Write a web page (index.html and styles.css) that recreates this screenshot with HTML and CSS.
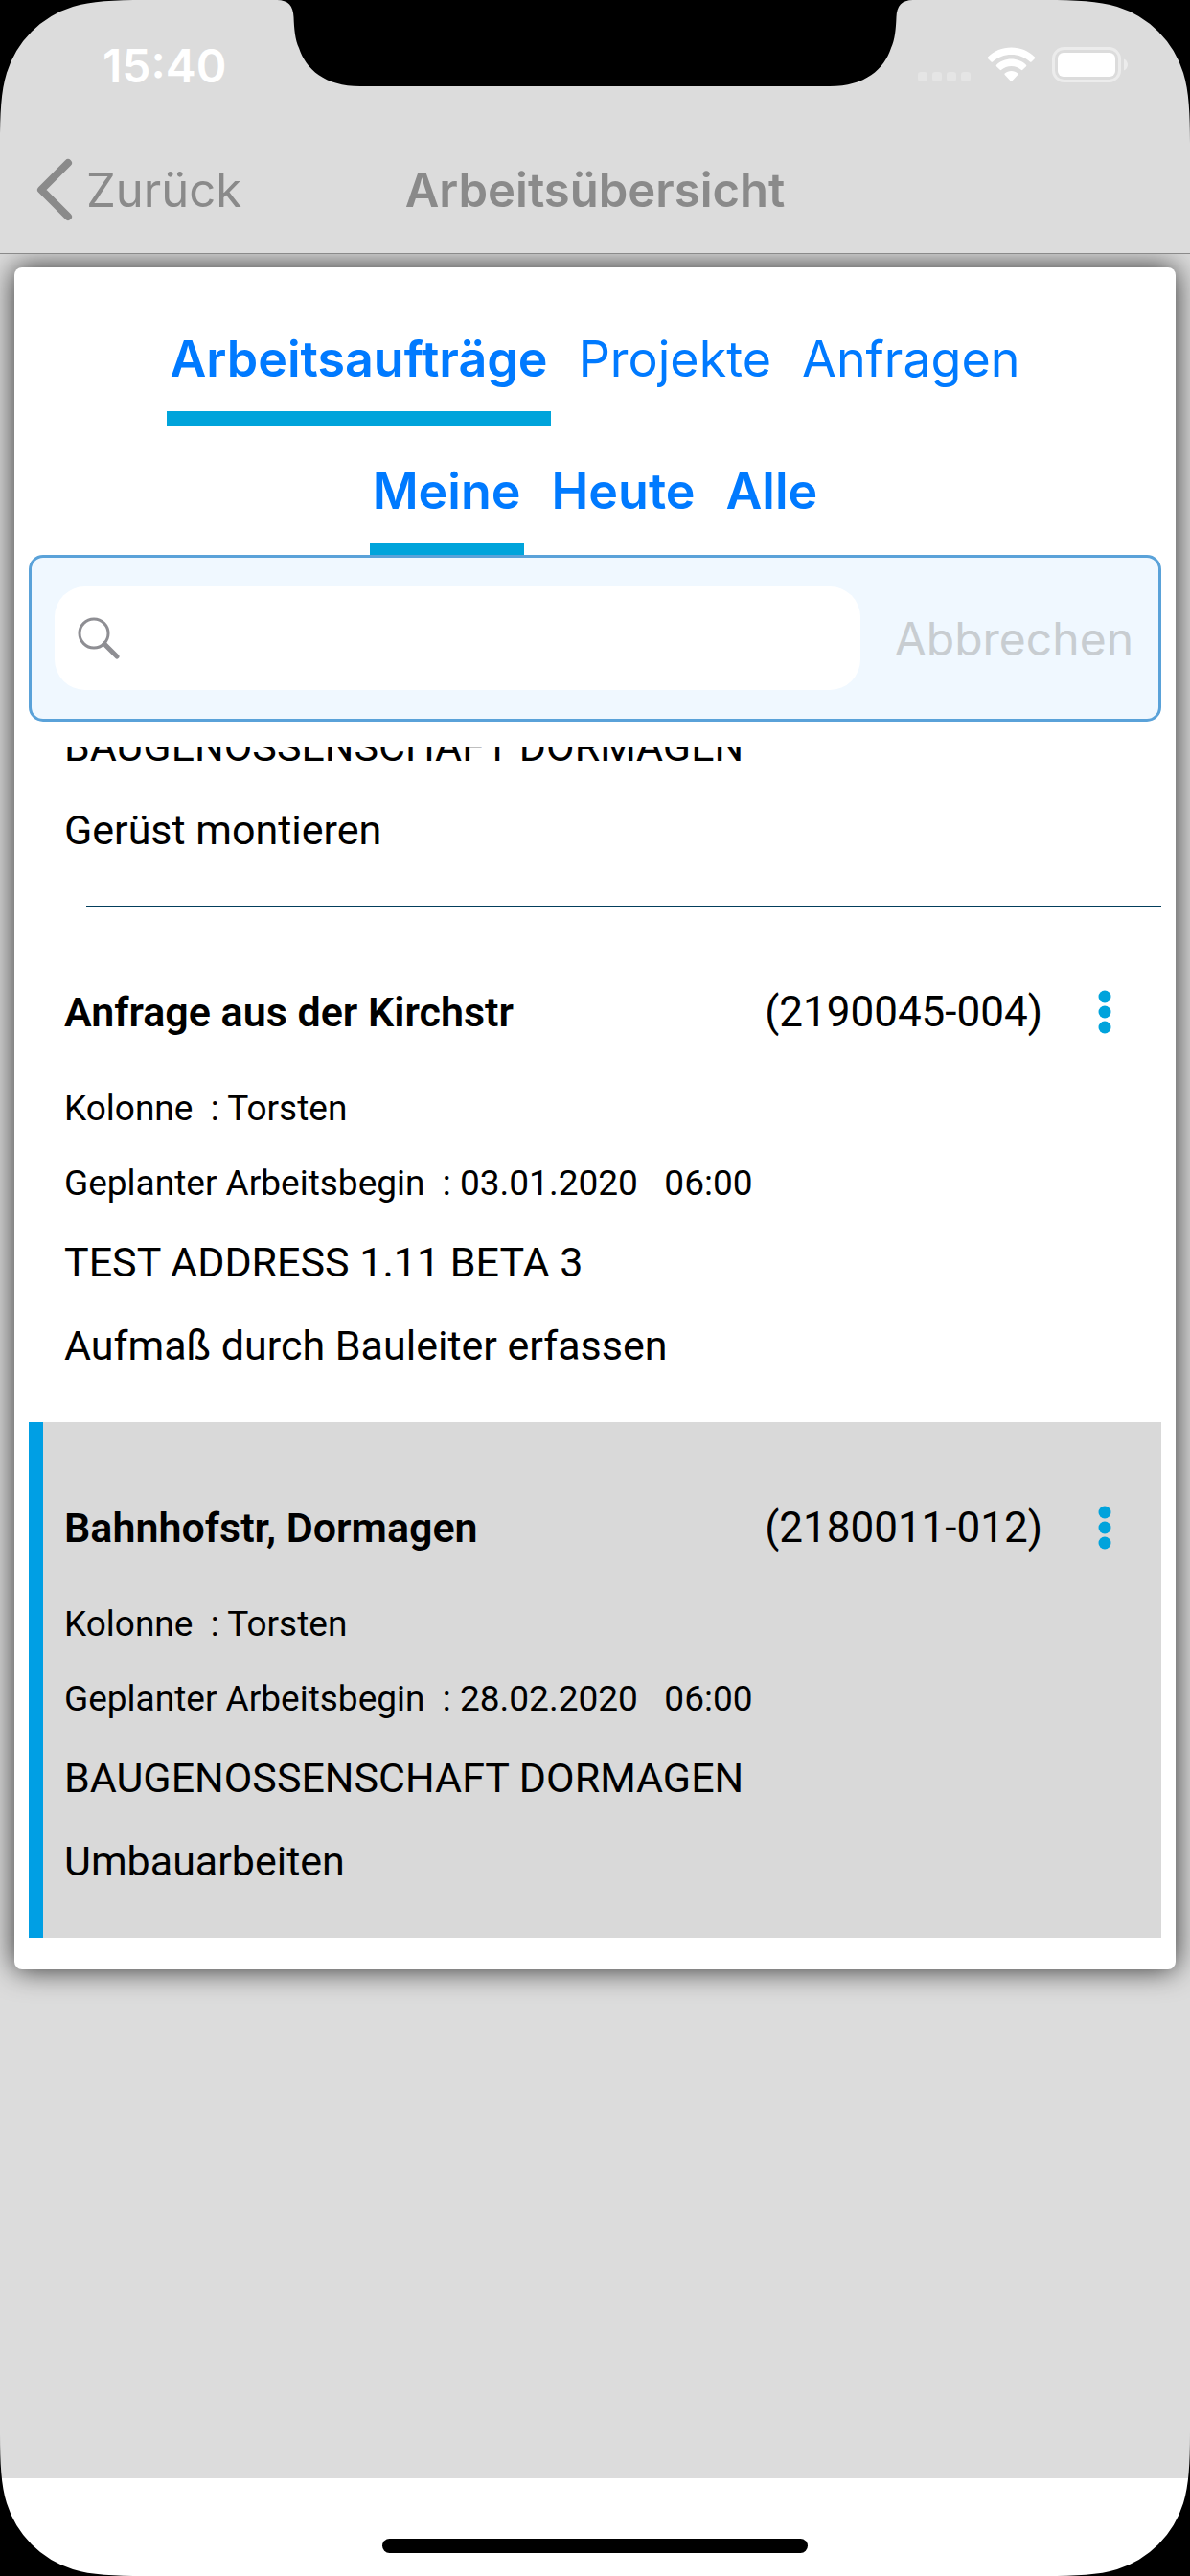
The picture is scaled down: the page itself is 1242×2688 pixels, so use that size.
FILE: index.html
```html
<!DOCTYPE html>
<html lang="de">
<head>
<meta charset="utf-8">
<meta name="viewport" content="width=device-width, initial-scale=1">
<title>Arbeitsübersicht</title>
<link rel="stylesheet" href="styles.css">
</head>
<body>
<div class="screen">
  <header class="topbar">
    <div class="status">
      <span class="clock">15:40</span>
      <svg class="status-icons" width="220" height="38" viewBox="0 0 220 38" aria-hidden="true">
        <g fill="#e5e5e5">
          <rect x="1" y="26" width="10" height="10" rx="3"/>
          <rect x="16" y="26" width="10" height="10" rx="3"/>
          <rect x="31" y="26" width="10" height="10" rx="3"/>
          <rect x="46" y="26" width="10" height="10" rx="3"/>
        </g>
        <g fill="#fff">
          <path d="M98.500 0.500C108 0.500 116.500 4 123 10.500Q123.600 11.200 123 12L119.500 15.500Q118.700 16.200 118 15.500C112.500 10.500 106 8 98.500 8C91 8 84.500 10.500 79 15.500Q78.300 16.200 77.500 15.500L74 12Q73.400 11.200 74 10.500C80.500 4 89 0.500 98.500 0.500Z"/>
          <path d="M98.500 12.500C104.500 12.500 110 14.800 114 18.700Q114.700 19.500 114 20.200L110.300 23.800Q109.500 24.500 108.800 23.800C106 21.400 102.500 20 98.500 20C94.500 20 91 21.400 88.200 23.800Q87.500 24.500 86.700 23.800L83 20.200Q82.300 19.500 83 18.700C87 14.800 92.500 12.500 98.500 12.500Z"/>
          <path d="M98.500 25C101.200 25 103.500 26 105.300 27.600Q106 28.300 105.300 29.100L99.200 35.500Q98.500 36.200 97.800 35.500L91.700 29.100Q91 28.300 91.700 27.600C93.500 26 95.800 25 98.500 25Z"/>
          <rect x="147" y="6" width="60" height="25" rx="6"/>
        </g>
        <rect x="142.500" y="1.500" width="69" height="34" rx="11" fill="none" stroke="#ececec" stroke-width="3"/>
        <path d="M216 12.500C218.500 13.500 220 16 220 18.500S218.500 23.500 216 24.500Z" fill="#ececec"/>
      </svg>
    </div>
    <nav class="navbar">
      <a class="back" href="#">
        <svg width="38" height="66" viewBox="0 0 38 66" aria-hidden="true"><path d="M33 5L5 33L33 61" fill="none" stroke="#8a8a8a" stroke-width="8" stroke-linecap="round" stroke-linejoin="round"/></svg>
        <span>Zurück</span>
      </a>
      <h1 class="title">Arbeitsübersicht</h1>
    </nav>
  </header>

  <main class="content">
    <section class="card">
      <div class="tabs">
        <button class="tab tab-strong tab-active" type="button">Arbeitsaufträge</button>
        <button class="tab" type="button">Projekte</button>
        <button class="tab" type="button">Anfragen</button>
      </div>
      <div class="tabs tabs-filter">
        <button class="tab tab-strong tab-active" type="button">Meine</button>
        <button class="tab tab-strong" type="button">Heute</button>
        <button class="tab tab-strong" type="button">Alle</button>
      </div>

      <form class="search">
        <label class="field">
          <svg width="44" height="44" viewBox="0 0 44 44" aria-hidden="true"><g fill="none" stroke="#8e8e93"><circle cx="17" cy="17" r="15" stroke-width="3"/><path d="M28 28L41 41" stroke-width="5" stroke-linecap="round"/></g></svg>
          <input type="search" aria-label="Suchen">
        </label>
        <button class="cancel" type="button" disabled>Abbrechen</button>
      </form>

      <ul class="orders">
        <li class="order order-lined">
          <p class="line">BAUGENOSSENSCHAFT DORMAGEN</p>
          <p class="line">Gerüst montieren</p>
        </li>
        <li class="order">
          <div class="order-head">
            <h2 class="order-title">Anfrage aus der Kirchstr</h2>
            <span class="order-no">(2190045-004)</span>
            <button class="more" type="button" aria-label="Mehr"><svg width="14" height="46" viewBox="0 0 14 46" aria-hidden="true"><g fill="#00a3dc"><circle cx="7" cy="7" r="6.500"/><circle cx="7" cy="23" r="6.500"/><circle cx="7" cy="39" r="6.500"/></g></svg></button>
          </div>
          <p class="detail">Kolonne  : Torsten</p>
          <p class="detail">Geplanter Arbeitsbegin  : 03.01.2020   06:00</p>
          <p class="line">TEST ADDRESS 1.11 BETA 3</p>
          <p class="line">Aufmaß durch Bauleiter erfassen</p>
        </li>
        <li class="order order-selected">
          <div class="order-head">
            <h2 class="order-title">Bahnhofstr, Dormagen</h2>
            <span class="order-no">(2180011-012)</span>
            <button class="more" type="button" aria-label="Mehr"><svg width="14" height="46" viewBox="0 0 14 46" aria-hidden="true"><g fill="#00a3dc"><circle cx="7" cy="7" r="6.500"/><circle cx="7" cy="23" r="6.500"/><circle cx="7" cy="39" r="6.500"/></g></svg></button>
          </div>
          <p class="detail">Kolonne  : Torsten</p>
          <p class="detail">Geplanter Arbeitsbegin  : 28.02.2020   06:00</p>
          <p class="line">BAUGENOSSENSCHAFT DORMAGEN</p>
          <p class="line">Umbauarbeiten</p>
        </li>
      </ul>
    </section>
  </main>

  <footer class="bottombar"><div class="home"></div></footer>

  <svg class="notch" width="664" height="90" viewBox="0 0 664 90" aria-hidden="true"><path d="M0 0C12 0 17 6 17.500 18C18 30 19 42 23 50C30 72 50 90 87 90H577C614 90 634 72 641 50C645 42 646 30 646.500 18C647 6 652 0 664 0Z"/></svg>
  <svg class="corner corner-tl" width="150" height="150" viewBox="0 0 150 150" aria-hidden="true"><path d="M0 0V150C0 120 1 95 7 76A105 105 0 0 1 76 7C95 1 120 0 150 0Z"/></svg>
  <svg class="corner corner-tr" width="150" height="150" viewBox="0 0 150 150" aria-hidden="true"><path d="M150 0V150C150 120 149 95 143 76A105 105 0 0 0 74 7C55 1 30 0 0 0Z"/></svg>
  <svg class="corner corner-bl" width="150" height="150" viewBox="0 0 150 150" aria-hidden="true"><path d="M0 150V0C0 30 1 55 7 74A105 105 0 0 0 76 143C95 149 120 150 150 150Z"/></svg>
  <svg class="corner corner-br" width="150" height="150" viewBox="0 0 150 150" aria-hidden="true"><path d="M150 150V0C150 30 149 55 143 74A105 105 0 0 1 74 143C55 149 30 150 0 150Z"/></svg>
</div>
</body>
</html>
```
FILE: styles.css
```css
* {
  box-sizing: border-box;
}

body {
  margin: 0;
  font-family: Inter, "Liberation Sans", sans-serif;
  background: #dcdcdc;
}

button,
input {
  margin: 0;
  padding: 0;
  border: 0;
  background: none;
  font: inherit;
}

svg {
  display: block;
  flex: none;
}

.screen {
  position: relative;
  display: flex;
  flex-direction: column;
  min-height: 100vh;
  overflow: hidden;
}

/* Status bar and navigation */
.topbar {
  position: relative;
  z-index: 1;
  background: #dcdcdc;
  border-bottom: 1px solid #8a8a8a;
}

.status {
  display: flex;
  align-items: center;
  justify-content: space-between;
  height: 132px;
  padding: 4px 65px 0 107px;
}

.clock {
  color: #fff;
  font-size: 48px;
  font-weight: 600;
}

.navbar {
  display: grid;
  grid-template-columns: 1fr auto 1fr;
  align-items: center;
  height: 132px;
  padding: 0 38px;
}

.back {
  display: flex;
  align-items: center;
  gap: 14px;
  color: #8a8a8a;
  font-size: 49px;
  text-decoration: none;
}

.title {
  margin: 0;
  color: #8a8a8a;
  font-size: 49px;
  font-weight: 600;
}

/* Card */
.content {
  flex: 1;
  padding: 14px 15px 48px;
}

.card {
  padding: 42px 15px 33px;
  background: #fff;
  border-radius: 8px;
  box-shadow: 0 0 30px rgba(0, 0, 0, 0.8);
}

.tabs {
  display: flex;
  justify-content: center;
  gap: 26px;
}

.tabs-filter {
  margin-top: 15px;
}

.tab {
  padding: 0 3px;
  border-bottom: 15px solid transparent;
  color: #007aff;
  font-size: 52px;
  line-height: 108px;
}

.tab-strong {
  font-weight: 600;
}

.tab-active {
  border-bottom-color: #00a4db;
}

.search {
  position: relative;
  display: flex;
  align-items: center;
  gap: 36px;
  margin-top: -3px;
  padding: 30px 26px 30px 24px;
  background: #f0f8ff;
  border: 3px solid #5aa2d9;
  border-radius: 15px;
}

.field {
  display: flex;
  flex: 1;
  align-items: center;
  gap: 16px;
  height: 108px;
  min-width: 0;
  padding: 0 24px;
  background: #fff;
  border-radius: 32px;
}

.field input {
  flex: 1;
  min-width: 0;
  font-size: 48px;
  outline: 0;
}

.cancel {
  color: #c8cdd1;
  font-size: 48px;
}

.orders {
  display: flex;
  flex-direction: column;
  justify-content: flex-end;
  height: 1242px;
  margin: 27px 0 0;
  padding: 0;
  overflow: hidden;
  color: #000;
  font-family: Roboto, "Liberation Sans", sans-serif;
  font-size: 44px;
  list-style: none;
}

.order {
  flex: none;
  padding: 48px 52px 36px 22px;
  border-left: 15px solid transparent;
}

.order-lined {
  padding: 0 0 0 22px;
}

.order-lined::after {
  content: "";
  display: block;
  height: 1px;
  margin: 35px 0 0 23px;
  background: #033e5c;
}

.order-selected {
  background: #d9d9d9;
  border-left-color: #009fe4;
}

.order-head {
  display: flex;
  align-items: center;
  height: 124px;
}

.order-title {
  flex: 1;
  margin: 0;
  font-size: 43px;
  font-weight: 600;
}

.more {
  margin-left: 58px;
}

.detail,
.line {
  margin: 0;
  white-space: pre;
}

.detail {
  font-size: 37px;
  line-height: 78px;
}

.line {
  font-size: 43px;
  line-height: 87px;
}

/* Home indicator */
.bottombar {
  display: flex;
  align-items: flex-end;
  justify-content: center;
  height: 102px;
  padding-bottom: 24px;
  background: #fff;
}

.home {
  width: 444px;
  height: 15px;
  background: #000;
  border-radius: 8px;
}

/* Display cut-outs */
.notch,
.corner {
  position: absolute;
  z-index: 2;
}

.notch {
  top: 0;
  right: 0;
  left: 0;
  margin: 0 auto;
}

.corner-tl {
  top: 0;
  left: 0;
}

.corner-tr {
  top: 0;
  right: 0;
}

.corner-bl {
  bottom: 0;
  left: 0;
}

.corner-br {
  right: 0;
  bottom: 0;
}
```
